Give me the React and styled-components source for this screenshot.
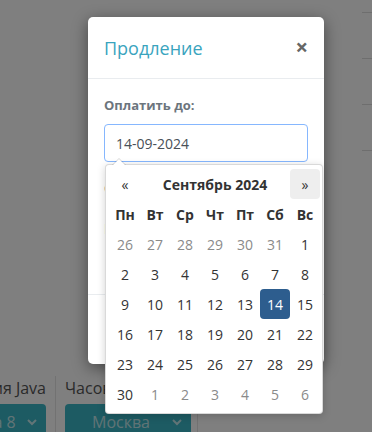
import React from "react";
import styled, { createGlobalStyle } from "styled-components";

const GlobalStyle = createGlobalStyle`
  * { box-sizing: border-box; }
  html, body { margin: 0; padding: 0; }
  body {
    width: 372px;
    height: 432px;
    overflow: hidden;
    background: #ffffff;
    font-family: "Open Sans", "Noto Sans", sans-serif;
    color: #333333;
  }
`;

const Page = styled.div`
  position: relative;
  width: 372px;
  height: 432px;
  overflow: hidden;
  display: flex;
  flex-direction: column;
  justify-content: space-between;
`;

const Table = styled.div`
  padding: 12px 0 0 362px;
`;

const TableRow = styled.div`
  height: 46px;
  border-top: 1px solid #dcdcdc;
`;

const Filters = styled.div`
  display: flex;
  height: 56px;
`;

const FilterCol = styled.div`
  width: ${({ $w }) => $w}px;
  display: flex;
  flex-direction: column;
  align-items: ${({ $end }) => ($end ? "flex-end" : "flex-start")};
  gap: 4px;
  padding: ${({ $end }) => ($end ? "0 9px 0 0" : "0 7px 0 9px")};
  border-right: 1px solid #e4e4e4;
  overflow: hidden;
`;

const FilterLabel = styled.div`
  font-size: 16px;
  line-height: 24px;
  color: #555555;
  white-space: nowrap;
`;

const Select = styled.div`
  width: ${({ $w }) => $w}px;
  flex: none;
  height: 36px;
  border-radius: 4px;
  background: #3ab7c6;
  color: rgba(255, 255, 255, 0.7);
  font-size: 16px;
  display: flex;
  align-items: center;
  justify-content: center;
  padding-right: 14px;
  position: relative;
  white-space: nowrap;

  svg {
    position: absolute;
    right: 8px;
    top: 12px;
  }
`;

const Overlay = styled.div`
  position: absolute;
  inset: 0;
  background: rgba(0, 0, 0, 0.5);
`;

const Modal = styled.div`
  position: absolute;
  left: 88px;
  top: 17px;
  width: 236px;
  background: #ffffff;
  border-radius: 5px;
  box-shadow: 0 4px 16px rgba(0, 0, 0, 0.45);
`;

const ModalHeader = styled.div`
  display: flex;
  align-items: center;
  justify-content: space-between;
  height: 62px;
  padding: 0 16px;
  border-bottom: 1px solid #e9ecef;
`;

const Title = styled.h5`
  margin: 0;
  font-size: 18px;
  font-weight: 400;
  color: #39a4be;
`;

const Close = styled.span`
  font-size: 22px;
  font-weight: 700;
  color: #666666;
  line-height: 1;
  margin-top: -4px;
`;

const ModalBody = styled.div`
  position: relative;
  padding: 16px;
  height: 215px;
`;

const FormGroup = styled.div`
  margin-bottom: 16px;
`;

const Label = styled.div`
  font-size: 13px;
  font-weight: 700;
  color: #6c757d;
  line-height: 20px;
  margin-bottom: 9px;
`;

const Input = styled.div`
  height: 38px;
  width: 204px;
  border: 1px solid #86b7fe;
  border-radius: 4px;
  padding: 0 11px;
  display: flex;
  align-items: center;
  font-size: 14px;
  color: #495057;
`;

const Hint = styled.div`
  font-size: 14px;
  color: #555555;
  padding-top: 12px;
`;

const ModalFooter = styled.div`
  height: 70px;
  border-top: 1px solid #e9ecef;
`;

const Picker = styled.div`
  position: absolute;
  left: 17px;
  top: 85px;
  width: 218px;
  padding: 4px;
  background: #ffffff;
  border: 1px solid rgba(0, 0, 0, 0.15);
  border-radius: 4px;
  box-shadow: 0 2px 8px rgba(0, 0, 0, 0.18);

  &::before {
    content: "";
    position: absolute;
    left: 6px;
    top: -7px;
    border-left: 7px solid transparent;
    border-right: 7px solid transparent;
    border-bottom: 7px solid rgba(0, 0, 0, 0.15);
  }
  &::after {
    content: "";
    position: absolute;
    left: 7px;
    top: -6px;
    border-left: 6px solid transparent;
    border-right: 6px solid transparent;
    border-bottom: 6px solid #ffffff;
  }
`;

const Grid = styled.div`
  display: grid;
  grid-template-columns: repeat(7, 30px);
  grid-auto-rows: 30px;
`;

const Cell = styled.div`
  display: flex;
  align-items: center;
  justify-content: center;
  border-radius: 4px;
  font-size: 14px;
  font-weight: ${({ $bold }) => ($bold ? 700 : 400)};
  color: ${({ $muted, $active }) =>
    $active ? "#ffffff" : $muted ? "#8a8a8a" : "#333333"};
  background: ${({ $active, $hover }) =>
    $active ? "#2d5d8e" : $hover ? "#eeeeee" : "transparent"};
`;

const MonthTitle = styled(Cell)`
  grid-column: span 5;
`;

const days = [
  [26, 27, 28, 29, 30, 31, 1],
  [2, 3, 4, 5, 6, 7, 8],
  [9, 10, 11, 12, 13, 14, 15],
  [16, 17, 18, 19, 20, 21, 22],
  [23, 24, 25, 26, 27, 28, 29],
  [30, 1, 2, 3, 4, 5, 6],
];

const Chevron = () => (
  <svg width="12" height="12" viewBox="0 0 12 12">
    <path d="M2 4 L6 8 L10 4" fill="none" stroke="currentColor" strokeWidth="2" />
  </svg>
);

export default function App() {
  return (
    <>
      <GlobalStyle />
      <Page>
        <Table>
          <TableRow />
          <TableRow />
          <TableRow />
          <TableRow />
        </Table>
        <Filters>
          <FilterCol $w={56} $end>
            <FilterLabel>Версия Java</FilterLabel>
            <Select $w={90}>
              Java 8
              <Chevron />
            </Select>
          </FilterCol>
          <FilterCol $w={142}>
            <FilterLabel>Часовой пояс</FilterLabel>
            <Select $w={126}>
              Москва
              <Chevron />
            </Select>
          </FilterCol>
        </Filters>
        <Overlay />
        <Modal>
          <ModalHeader>
            <Title>Продление</Title>
            <Close>×</Close>
          </ModalHeader>
          <ModalBody>
            <FormGroup>
              <Label>Оплатить до:</Label>
              <Input>14-09-2024</Input>
            </FormGroup>
            <Label>Сумма:</Label>
            <Hint>Ⅰ</Hint>
            <Picker>
              <Grid>
                <Cell>«</Cell>
                <MonthTitle $bold>Сентябрь 2024</MonthTitle>
                <Cell $hover>»</Cell>
                {["Пн", "Вт", "Ср", "Чт", "Пт", "Сб", "Вс"].map((d) => (
                  <Cell key={d} $bold>
                    {d}
                  </Cell>
                ))}
                {days.map((row, r) =>
                  row.map((d, i) => (
                    <Cell
                      key={`${r}-${i}`}
                      $muted={(r === 0 && d > 20) || (r === 5 && d < 10)}
                      $active={r === 2 && d === 14}
                    >
                      {d}
                    </Cell>
                  ))
                )}
              </Grid>
            </Picker>
          </ModalBody>
          <ModalFooter />
        </Modal>
      </Page>
    </>
  );
}
